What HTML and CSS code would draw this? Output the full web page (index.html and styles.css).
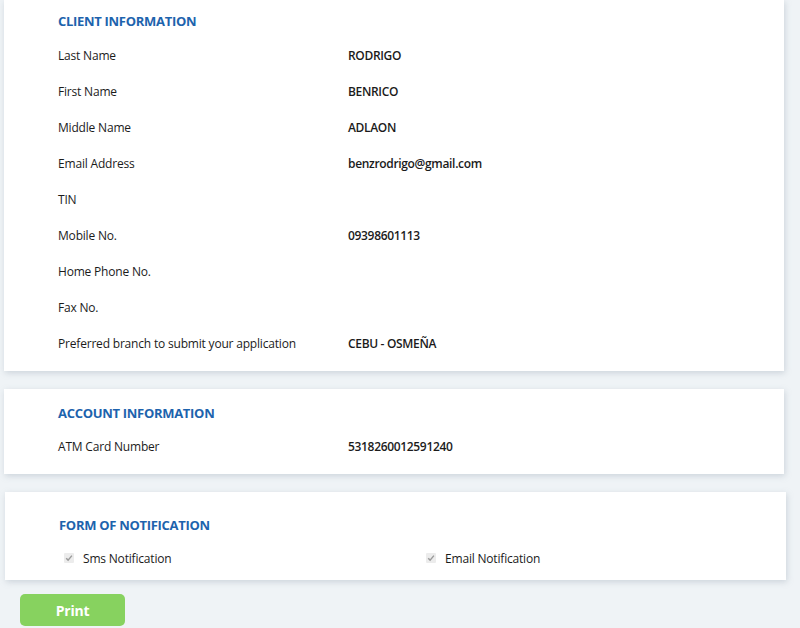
FILE: index.html
```html
<!DOCTYPE html>
<html>
<head>
<meta charset="utf-8">
<link rel="stylesheet" href="styles.css">
</head>
<body>
<div class="page">
  <section class="card card-client">
    <h2 class="card-title">CLIENT INFORMATION</h2>
    <div class="rows">
      <div class="row"><span class="label">Last Name</span><span class="value">RODRIGO</span></div>
      <div class="row"><span class="label">First Name</span><span class="value">BENRICO</span></div>
      <div class="row"><span class="label">Middle Name</span><span class="value">ADLAON</span></div>
      <div class="row"><span class="label">Email Address</span><span class="value">benzrodrigo@gmail.com</span></div>
      <div class="row"><span class="label">TIN</span><span class="value"></span></div>
      <div class="row"><span class="label">Mobile No.</span><span class="value">09398601113</span></div>
      <div class="row"><span class="label">Home Phone No.</span><span class="value"></span></div>
      <div class="row"><span class="label">Fax No.</span><span class="value"></span></div>
      <div class="row"><span class="label">Preferred branch to submit your application</span><span class="value">CEBU - OSMEÑA</span></div>
    </div>
  </section>
  <section class="card card-account">
    <h2 class="card-title">ACCOUNT INFORMATION</h2>
    <div class="rows">
      <div class="row"><span class="label">ATM Card Number</span><span class="value">5318260012591240</span></div>
    </div>
  </section>
  <section class="card card-notify">
    <h2 class="card-title">FORM OF NOTIFICATION</h2>
    <div class="checks">
      <label class="check"><span class="box"><svg viewBox="0 0 10 10" width="10" height="10"><path d="M2.2 5.2 L4.1 7.1 L7.9 2.6" fill="none" stroke="#9a9a9a" stroke-width="1.4"/></svg></span>Sms Notification</label>
      <label class="check"><span class="box"><svg viewBox="0 0 10 10" width="10" height="10"><path d="M2.2 5.2 L4.1 7.1 L7.9 2.6" fill="none" stroke="#9a9a9a" stroke-width="1.4"/></svg></span>Email Notification</label>
    </div>
  </section>
  <div class="actions">
    <button class="btn-print" type="button">Print</button>
  </div>
</div>
</body>
</html>
```

FILE: styles.css
```css
html, body {
  margin: 0;
  padding: 0;
  background: #eff3f6;
}
body {
  font-family: "Open Sans", "Noto Sans", sans-serif;
  color: #1b1b1b;
  font-size: 12px;
  letter-spacing: -0.19px;
}
.page {
  width: 800px;
  height: 628px;
  overflow: hidden;
}
.card {
  background: #fff;
  margin-left: 4px;
  width: 780px;
  box-sizing: border-box;
  padding-left: 54px;
  box-shadow: 1px 2px 6px rgba(140, 155, 170, 0.35);
}
.card-title {
  margin: 0;
  font-size: 13px;
  font-weight: 700;
  line-height: 20px;
  color: #1d63ad;
  letter-spacing: -0.3px;
}
.row {
  display: flex;
  height: 36px;
  align-items: center;
}
.label {
  width: 290px;
  flex: none;
}
.value {
  font-weight: 600;
  letter-spacing: -0.33px;
}
.card-client {
  padding-top: 11px;
  padding-bottom: 10px;
}
.card-client .rows {
  margin-top: 6px;
}
.card-account {
  margin-top: 18px;
  padding-top: 14px;
  padding-bottom: 10px;
}
.card-account .rows {
  margin-top: 5px;
}
.card-notify {
  margin-top: 18px;
  margin-left: 5px;
  width: 781px;
  padding-top: 23px;
  padding-bottom: 7px;
  padding-left: 54px;
}
.checks {
  display: flex;
  margin-top: 8px;
  height: 30px;
  align-items: center;
}
.check {
  display: flex;
  align-items: center;
  width: 367px;
  flex: none;
  padding-left: 5px;
  box-sizing: border-box;
}
.check + .check {
  width: auto;
  padding-left: 0;
}
.box {
  width: 10px;
  height: 10px;
  background: #ececec;
  border-radius: 1px;
  margin-right: 9px;
  display: flex;
}
.actions {
  padding-left: 20px;
  margin-top: 14px;
}
.btn-print {
  width: 105px;
  height: 32px;
  border: none;
  border-radius: 5px;
  background: #87d25f;
  color: #fff;
  font-family: "Open Sans", sans-serif;
  font-weight: 700;
  font-size: 14px;
  letter-spacing: -0.2px;
  padding: 0;
}
```
